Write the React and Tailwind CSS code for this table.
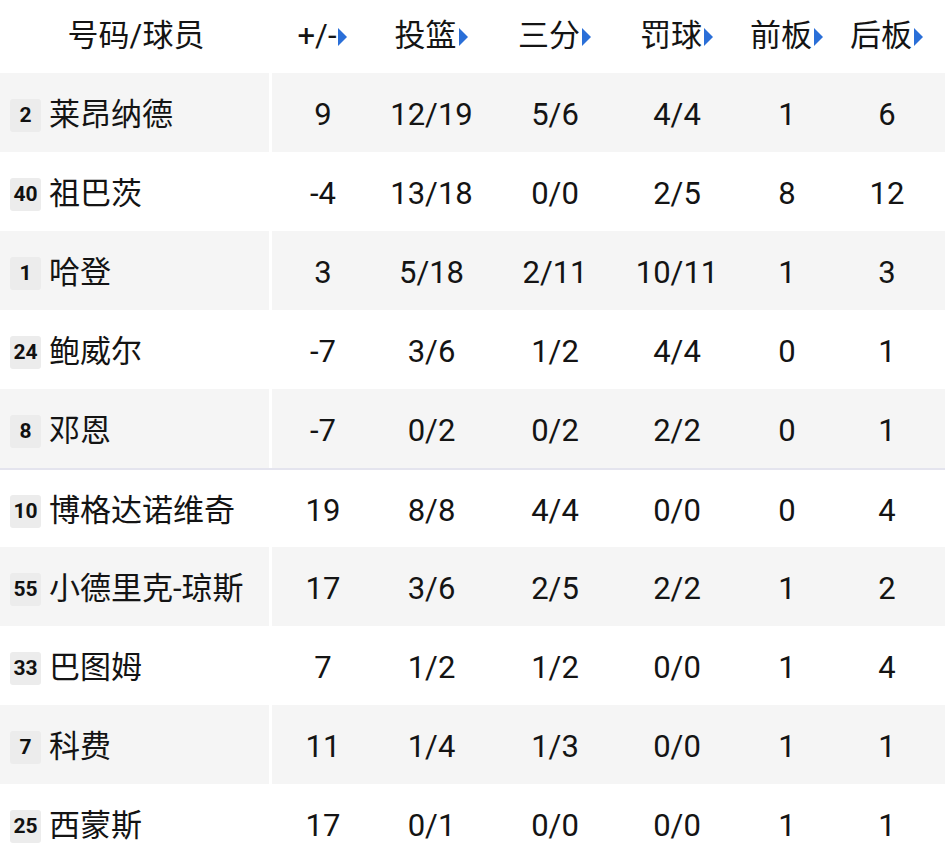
import React from "react";

const cols = [
    { label: "+/-", arrow: true },
    { label: "投篮", arrow: true },
    { label: "三分", arrow: true },
    { label: "罚球", arrow: true },
    { label: "前板", arrow: true },
    { label: "后板", arrow: true },
];

const players = [
    { no: "2", name: "莱昂纳德", stats: ["9", "12/19", "5/6", "4/4", "1", "6"] },
    { no: "40", name: "祖巴茨", stats: ["-4", "13/18", "0/0", "2/5", "8", "12"] },
    { no: "1", name: "哈登", stats: ["3", "5/18", "2/11", "10/11", "1", "3"] },
    { no: "24", name: "鲍威尔", stats: ["-7", "3/6", "1/2", "4/4", "0", "1"] },
    { no: "8", name: "邓恩", stats: ["-7", "0/2", "0/2", "2/2", "0", "1"] },
    { no: "10", name: "博格达诺维奇", stats: ["19", "8/8", "4/4", "0/0", "0", "4"] },
    { no: "55", name: "小德里克-琼斯", stats: ["17", "3/6", "2/5", "2/2", "1", "2"] },
    { no: "33", name: "巴图姆", stats: ["7", "1/2", "1/2", "0/0", "1", "4"] },
    { no: "7", name: "科费", stats: ["11", "1/4", "1/3", "0/0", "1", "1"] },
    { no: "25", name: "西蒙斯", stats: ["17", "0/1", "0/0", "0/0", "1", "1"] },
];

const grid = "grid grid-cols-[272px_102px_115px_132px_112px_108px_92px]";

const Arrow = () => (
    <svg width="11" height="20" viewBox="0 0 11 20" className="ml-[1px]">
        <path d="M1 1 L10 10 L1 19 Z" fill="#2a6fd8" />
    </svg>
);

const App = () => {
    return (
        <div
            className="w-[945px] h-[851px] overflow-hidden bg-white text-[#141414]"
            style={{ fontFamily: 'Roboto, "Noto Sans CJK SC", sans-serif' }}
        >
            {/* header */}
            <div className={`${grid} h-[73px] items-center text-[31px]`}>
                <div className="flex justify-center">号码/球员</div>
                {cols.map((c) => (
                    <div key={c.label} className="flex items-center justify-center">
                        <span>{c.label}</span>
                        {c.arrow && <Arrow />}
                    </div>
                ))}
            </div>
            {players.map((p, i) => {
                const gray = i % 2 === 0;
                return (
                    <div
                        key={p.no}
                        className={`${grid} h-[79px] items-center text-[31px] ${gray ? "bg-[#f5f5f5]" : "bg-white"} ${i === 5 ? "border-t-2 border-[#e4e4ee]" : ""}`}
                    >
                        <div className="h-full flex items-center border-r-[3px] border-white pl-[10px] pt-[6px]">
                            <span className="min-w-[31px] h-[33px] px-[3px] flex items-center justify-center bg-[#ececec] rounded-[3px] text-[21px] font-bold leading-none text-[#111]">
                                {p.no}
                            </span>
                            <span className="ml-[8px] whitespace-nowrap">{p.name}</span>
                        </div>
                        {p.stats.map((s, j) => (
                            <div key={j} className="flex justify-center pt-[6px]">
                                {s}
                            </div>
                        ))}
                    </div>
                );
            })}
        </div>
    );
};

export default App;
